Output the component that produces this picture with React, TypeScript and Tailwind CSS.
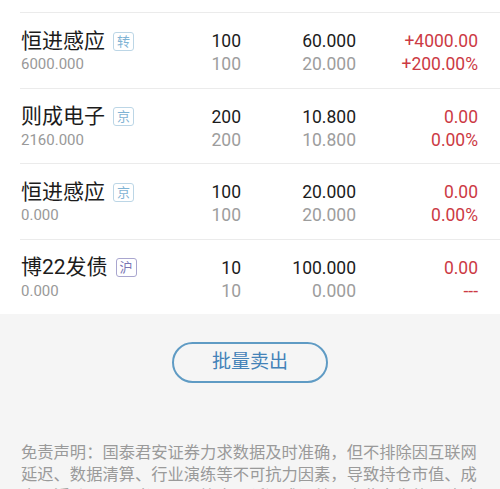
import React from "react";

type Holding = {
  name: string;
  tag: string;
  tone: "blue" | "purple";
  value: string;
  qty: string;
  avail: string;
  price: string;
  cost: string;
  pnl: string;
  pct: string;
};

const HOLDINGS: Holding[] = [
  { name: "恒进感应", tag: "转", tone: "blue", value: "6000.000", qty: "100", avail: "100", price: "60.000", cost: "20.000", pnl: "+4000.00", pct: "+200.00%" },
  { name: "则成电子", tag: "京", tone: "blue", value: "2160.000", qty: "200", avail: "200", price: "10.800", cost: "10.800", pnl: "0.00", pct: "0.00%" },
  { name: "恒进感应", tag: "京", tone: "blue", value: "0.000", qty: "100", avail: "100", price: "20.000", cost: "20.000", pnl: "0.00", pct: "0.00%" },
  { name: "博22发债", tag: "沪", tone: "purple", value: "0.000", qty: "10", avail: "10", price: "100.000", cost: "0.000", pnl: "0.00", pct: "---" },
];

const DISCLAIMER = [
  "免责声明：国泰君安证券力求数据及时准确，但不排除因互联网",
  "延迟、数据清算、行业演练等不可抗力因素，导致持仓市值、成",
  "本、浮动盈亏、当日盈亏等出现延迟或误差，由此产生的风险请",
];

function Tag({ label, tone }: { label: string; tone: "blue" | "purple" }) {
  const cls =
    tone === "blue"
      ? "border-[#bcd6e6] text-[#7fb3d4]"
      : "border-[#a9a6cf] text-[#7b76b4]";
  return (
    <span
      className={`ml-[8px] inline-flex h-[19px] w-[21px] items-center justify-center rounded-[3px] border text-[13px] leading-none ${cls}`}
    >
      {label}
    </span>
  );
}

function Row({ h }: { h: Holding }) {
  return (
    <div className="ml-[20px] h-[75.5px] border-t border-[#ebebeb] pl-[1px] pr-[22px] pt-[16px]">
      <div className="grid grid-cols-[1fr_60px_115px_122px] text-right">
        <div className="flex h-[24px] items-center text-left text-[21px] text-[#1c1c1c]">
          <span className="leading-none">{h.name}</span>
          <Tag label={h.tag} tone={h.tone} />
        </div>
        <div className="h-[24px] text-[17.5px] leading-[24px] text-[#1c1c1c]">{h.qty}</div>
        <div className="h-[24px] text-[17.5px] leading-[24px] text-[#1c1c1c]">{h.price}</div>
        <div className="h-[24px] text-[17.5px] leading-[24px] text-[#cc3a44]">{h.pnl}</div>

        <div className="h-[22px] text-left text-[15px] leading-[22px] text-[#999999]">{h.value}</div>
        <div className="h-[22px] text-[17.5px] leading-[22px] text-[#9d9d9d]">{h.avail}</div>
        <div className="h-[22px] text-[17.5px] leading-[22px] text-[#9d9d9d]">{h.cost}</div>
        <div className="h-[22px] text-[17.5px] leading-[22px] text-[#cc3a44]">{h.pct}</div>
      </div>
    </div>
  );
}

export default function App() {
  return (
    <div
      className="h-[489px] w-[500px] overflow-hidden bg-white"
      style={{ fontFamily: "Roboto, 'Noto Sans CJK SC', sans-serif" }}
    >
      {/* tail of the previous row */}
      <div className="h-[12px]" />

      {/* Holdings list */}
      <div className="bg-white">
        {HOLDINGS.map((h, i) => (
          <Row key={i} h={h} />
        ))}
      </div>

      {/* Footer */}
      <div className="bg-[#f5f5f5] pt-[28px]">
        <div className="flex justify-center">
          <button className="h-[41px] w-[156px] rounded-full border-2 border-[#5f9bc4] text-[19px] text-[#4382b8]">
            批量卖出
          </button>
        </div>
        <div className="mt-[57px] px-[21px] text-[16.3px] leading-[22px] text-[#9a9a9a]">
          {DISCLAIMER.map((line, i) => (
            <div key={i} className="whitespace-nowrap" style={{ fontFamily: "'Noto Sans CJK SC', sans-serif" }}>
              {line}
            </div>
          ))}
        </div>
      </div>
    </div>
  );
}
